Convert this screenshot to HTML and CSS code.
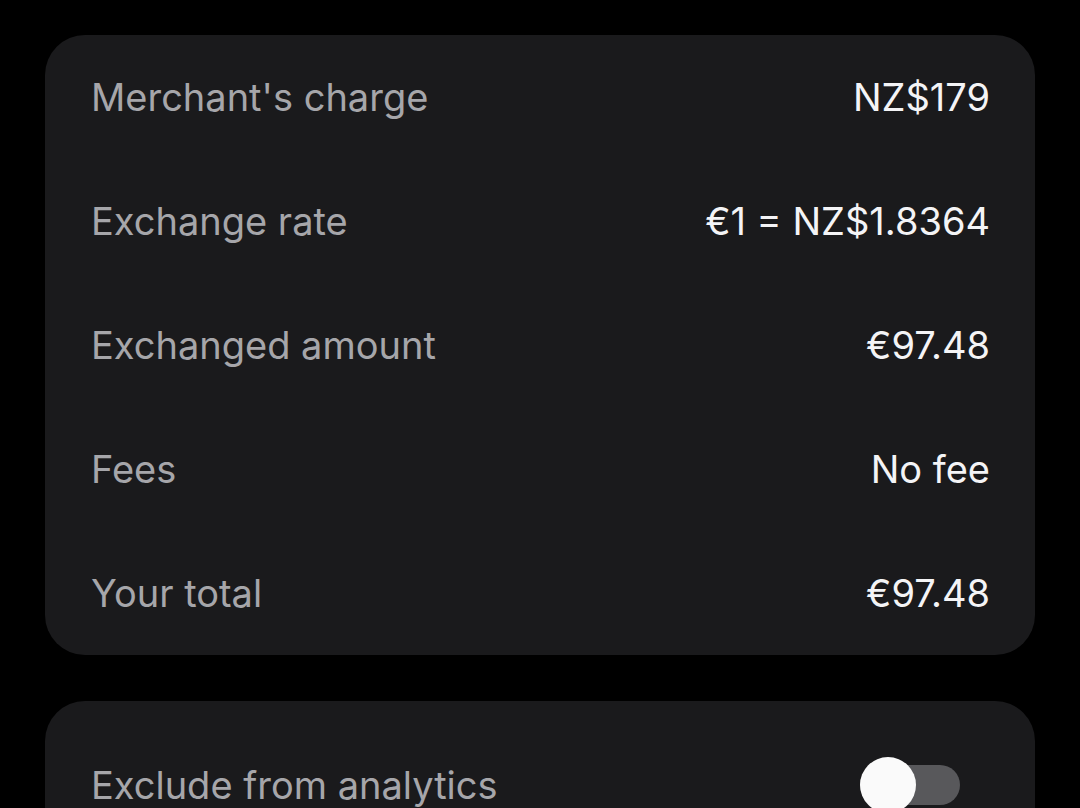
FILE: index.html
```html
<!DOCTYPE html>
<html lang="en">
<head>
  <meta charset="UTF-8" />
  <meta name="viewport" content="width=device-width, initial-scale=1.0" />
  <title>Transaction details</title>
  <link rel="stylesheet" href="styles.css">
</head>
<body>

  <div class="card">
    <div class="row">
      <span class="label">Merchant's charge</span>
      <span class="value">NZ$179</span>
    </div>
    <div class="row">
      <span class="label">Exchange rate</span>
      <span class="value">€1 = NZ$1.8364</span>
    </div>
    <div class="row">
      <span class="label">Exchanged amount</span>
      <span class="value">€97.48</span>
    </div>
    <div class="row">
      <span class="label">Fees</span>
      <span class="value">No fee</span>
    </div>
    <div class="row">
      <span class="label">Your total</span>
      <span class="value">€97.48</span>
    </div>
  </div>

  <div class="card card-settings">
    <div class="row">
      <span class="label">Exclude from analytics</span>
      <div class="toggle">
        <div class="knob"></div>
      </div>
    </div>
  </div>

</body>
</html>
```

FILE: styles.css
```css
* {
  box-sizing: border-box;
  margin: 0;
  padding: 0;
  font-family: 'Inter', 'Roboto', sans-serif;
}

body {
  background: #000;
  padding: 35px 45px 0 45px;
  display: flex;
  flex-direction: column;
  gap: 46px;
  overflow: hidden;
  height: 808px;
}

.card {
  background: #1a1a1c;
  border-radius: 40px;
  padding: 0 45px 0 46px;
  flex-shrink: 0;
}

.card-settings {
  padding-top: 22px;
}

.row {
  height: 124px;
  display: flex;
  align-items: center;
  justify-content: space-between;
}

.label {
  font-size: 38px;
  color: #a6a6aa;
}

.value {
  font-size: 38px;
  color: #f4f4f6;
}

.toggle {
  position: relative;
  width: 100px;
  height: 40px;
  background: #58585b;
  border-radius: 20px;
  margin-right: 30px;
}

.knob {
  position: absolute;
  left: 0;
  top: -8px;
  width: 56px;
  height: 56px;
  border-radius: 50%;
  background: #fafafa;
}
```
